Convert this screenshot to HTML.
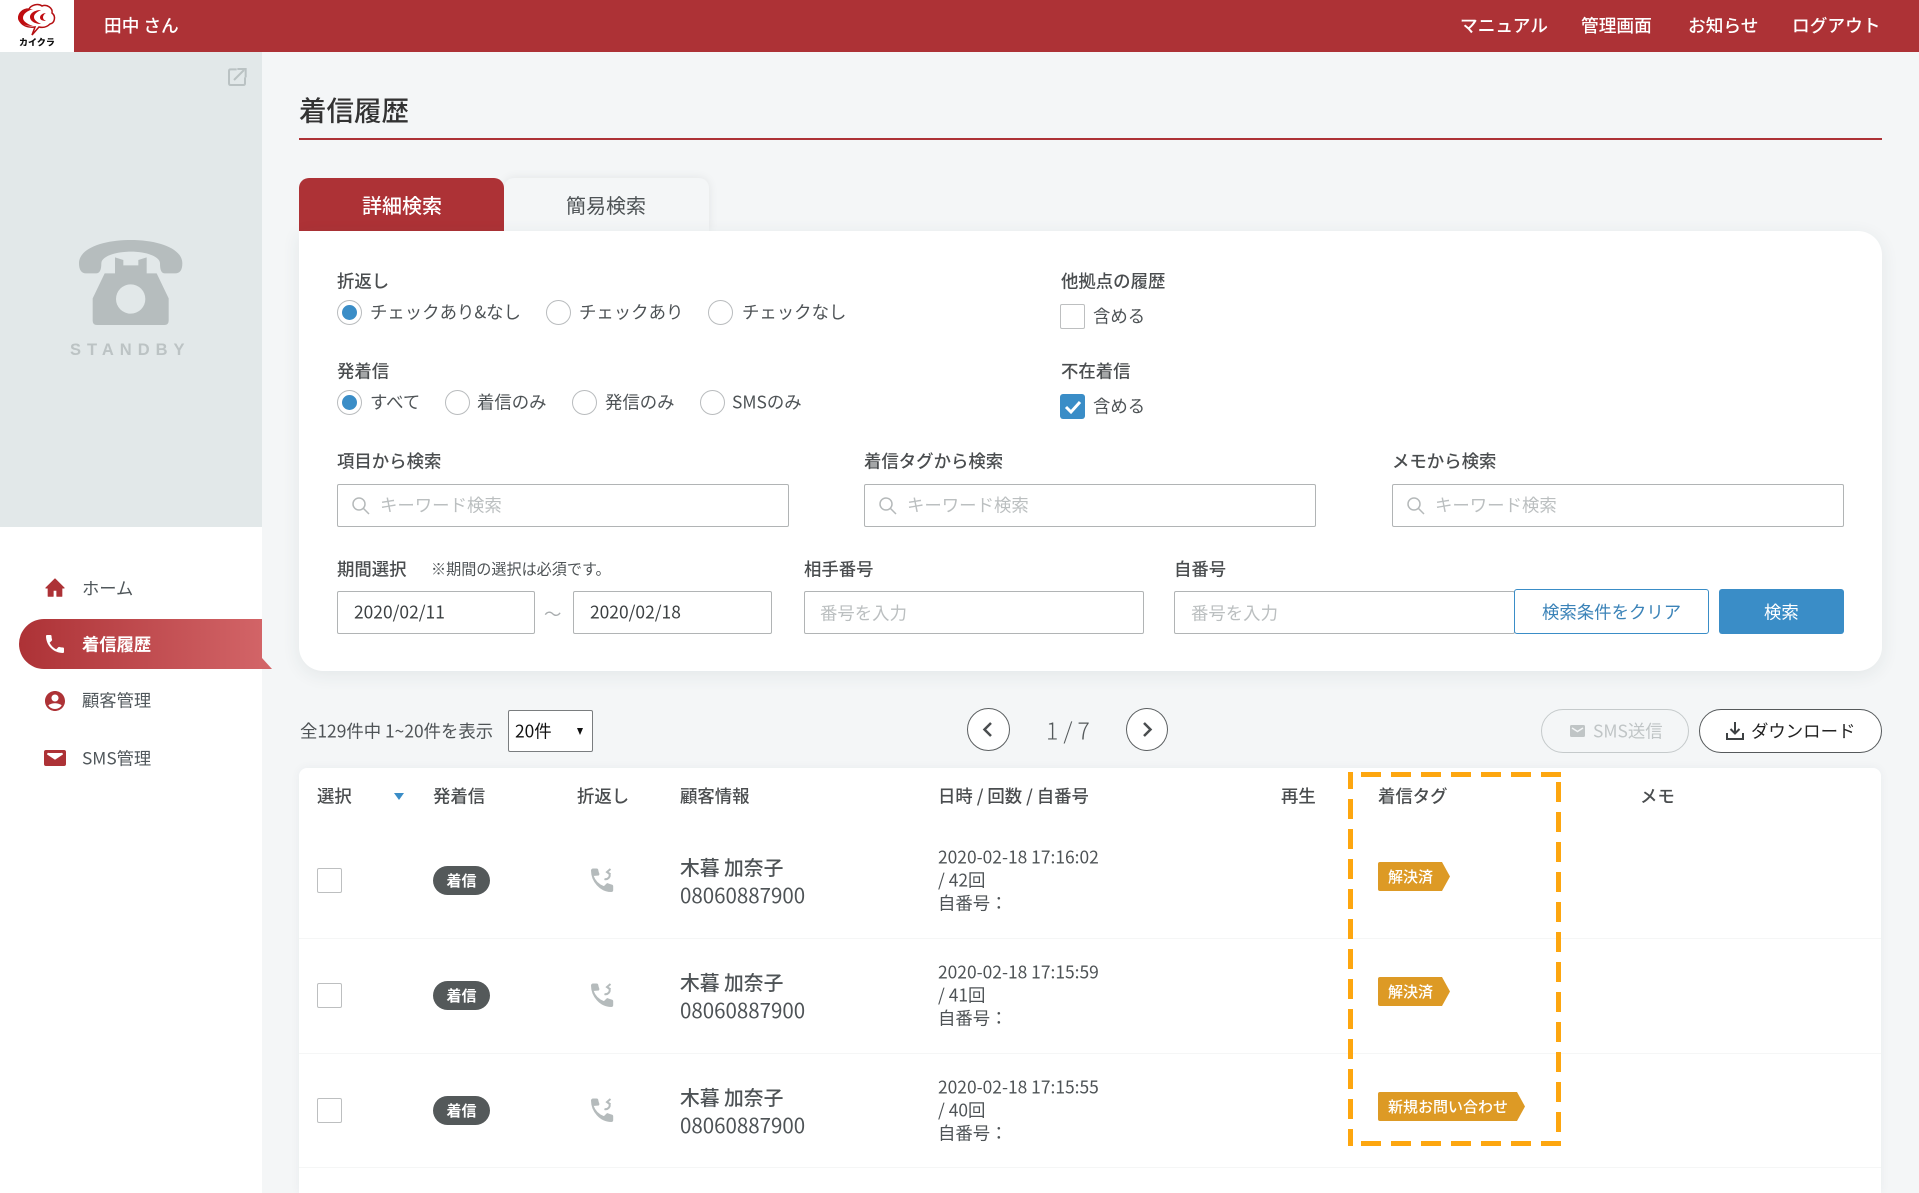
<!DOCTYPE html>
<html lang="ja"><head><meta charset="utf-8"><title>着信履歴</title>
<style>
*{box-sizing:border-box}
html,body{margin:0;padding:0;width:1919px;height:1193px;overflow:hidden}
body{font-family:"Noto Sans CJK JP","Liberation Sans",sans-serif;color:#4e5356}
#w{position:relative;width:1919px;height:1193px;overflow:hidden;background:#f4f6f7}
.a{position:absolute}
.t{position:absolute;line-height:1;white-space:nowrap;transform:translateY(calc(-50% - 1px));font-size:17.4px}
.h{color:#fff;font-weight:500;font-size:17.7px}
.l{color:#4a4d4f;font-weight:500}
.r{position:absolute;width:25px;height:25px;border-radius:50%;border:1px solid #b9bcbe;background:#fff}
.r.on::after{content:"";position:absolute;left:4px;top:4px;width:15px;height:15px;border-radius:50%;background:#3a8dc7}
.c{position:absolute;width:25px;height:25px;border:1px solid #bdbfc0;border-radius:2px;background:#fff}
.i{position:absolute;background:#fff;border:1px solid #b1b4b5;border-radius:2px;height:43px}
.p{color:#bbbfc0}
.sep{position:absolute;left:299px;width:1582px;height:1px;background:#f5f6f6}
.bd{position:absolute;left:433px;width:57px;height:29px;border-radius:15px;background:#54595a;color:#fff;font-size:15px;font-weight:700;line-height:29px;text-align:center}
.tag{position:absolute;left:1378px;height:29px;background:#dd9a25;color:#fff;font-size:15px;font-weight:500;line-height:29px;border-radius:2px 0 0 2px;clip-path:polygon(0 0,calc(100% - 8px) 0,100% 50%,calc(100% - 8px) 100%,0 100%)}
.name{font-size:19.800px;font-weight:500;color:#4e5356}
.num{font-size:20.500px;color:#4e5356}
.d{font-size:17.400px;color:#4e5356}
.s{font-size:17.300px;color:#50575b}
</style></head><body><div id="w">

<!-- header -->
<div class="a" style="left:0;top:0;width:1919px;height:52px;background:#ad3236"></div>
<div class="a" style="left:0;top:0;width:74px;height:52px;background:#fff"></div>
<svg class="a" style="left:0;top:0" width="74" height="52" viewBox="0 0 74 52">
<path d="M19 19C18 13 23 9 29 9C31 5 38 3 42 6C47 4 53 8 52 13C56 16 55 23 50 24C47 27 43 28 39 27L32 35L35 27C27 28 21 25 19 19Z" fill="#fff" stroke="#b50f12" stroke-width="1.500"/>
<path d="M33 9C24 9 18 13 18 18C18 23 25 26 33 26C27 24 23 21 23 18C23 14 27 11 33 9Z" fill="#c00d10"/>
<path d="M41 10C35 10 30 13 30 17C30 21 35 24 41 24C37 22 34 20 34 17C34 14 37 12 41 10Z" fill="#c00d10"/>
<path d="M46 13C43 13 40 15 40 17.500C40 20 43 21 46 21C44 20 43 19 43 17.500C43 16 44 14 46 13Z" fill="#c00d10"/>
</svg>
<div class="t" style="left:19px;top:43px;font-size:9px;font-weight:900;color:#111;letter-spacing:0">カイクラ</div>
<div class="t h" style="left:104px;top:27px;font-size:17.700px">田中 さん</div>
<div class="t h" style="left:1460px;top:27px">マニュアル</div>
<div class="t h" style="left:1581px;top:27px">管理画面</div>
<div class="t h" style="left:1688px;top:27px">お知らせ</div>
<div class="t h" style="left:1792px;top:27px">ログアウト</div>

<!-- sidebar -->
<div class="a" style="left:0;top:52px;width:262px;height:476px;background:#e2e8e9"></div>
<div class="a" style="left:0;top:527px;width:262px;height:666px;background:#fff"></div>
<svg class="a" style="left:0;top:0" width="300" height="380" viewBox="0 0 900 1140">
<path d="M710 208H692Q687 208 687 213V250Q687 255 692 255H730Q735 255 735 250V232" fill="none" stroke="#bac2c3" stroke-width="6"/>
<path d="M702 240L732 210M712 207H737V232" fill="none" stroke="#bac2c3" stroke-width="6"/>
<path d="M237 790C237 745 310 720 392 720C474 720 547 745 547 790C547 810 540 820 525 820L495 820C485 820 480 812 480 790C480 770 440 755 392 755C344 755 304 770 304 790C304 812 298 820 288 820L258 820C245 820 237 810 237 790Z" fill="#b6bdbe"/>
<path d="M345 772L370 780V796H415V780L440 772V820H470L506 895V962Q506 975 493 975H291Q278 975 278 962V895L314 820H345Z" fill="#b6bdbe"/>
<circle cx="392" cy="897" r="44" fill="#e2e8e9"/>
</svg>
<div class="t" style="left:70px;top:351px;font-family:'Liberation Sans',sans-serif;font-size:16.500px;font-weight:700;letter-spacing:6px;color:#bcc3c4">STANDBY</div>

<div class="a" style="left:19px;top:619px;width:243px;height:50px;border-radius:25px 0 0 25px;background:linear-gradient(90deg,#ad3236,#d26467)"></div>
<div class="a" style="left:262px;top:658px;width:10px;height:11px;background:#d26467;clip-path:polygon(0 0,100% 100%,0 100%)"></div>
<svg class="a" style="left:44px;top:577px" width="22" height="22" viewBox="0 0 24 24"><path d="M10 21v-6.500h4V21h5.500v-9H22L12 2 2 12h2.500v9z" fill="#ad3236" stroke="#ad3236" stroke-linejoin="round"/></svg>
<svg class="a" style="left:43px;top:632px" width="24" height="24" viewBox="0 0 24 24"><path d="M6.620 10.790c1.440 2.830 3.760 5.140 6.590 6.590l2.200-2.200c.27-.27.67-.36 1.020-.24 1.120.37 2.330.57 3.570.57.550 0 1 .45 1 1V20c0 .55-.45 1-1 1-9.390 0-17-7.610-17-17 0-.55.45-1 1-1h3.500c.55 0 1 .45 1 1 0 1.250.2 2.450.57 3.570.11.35.03.74-.25 1.020l-2.200 2.200z" fill="#fff"/></svg>
<svg class="a" style="left:43px;top:689px" width="24" height="24" viewBox="0 0 24 24"><path d="M12 2C6.480 2 2 6.480 2 12s4.480 10 10 10 10-4.480 10-10S17.520 2 12 2zm0 3.500c1.930 0 3.500 1.570 3.500 3.500S13.930 12.500 12 12.500 8.500 10.930 8.500 9 10.070 5.500 12 5.500zm0 14.500c-2.800 0-5.270-1.430-6.700-3.600C6.800 15 10 14.300 12 14.300s5.200.7 6.700 2.100C17.270 18.570 14.800 20 12 20z" fill="#ad3236"/></svg>
<svg class="a" style="left:44px;top:750px" width="22" height="16" viewBox="0 0 22 16"><path d="M2 0h18q2 0 2 2v12q0 2-2 2H2q-2 0-2-2V2q0-2 2-2zm1 3l8 5.500L19 3" fill="#ad3236"/><path d="M3.500 3.500L11 8.500l7.500-5" fill="none" stroke="#fff" stroke-width="2"/></svg>
<div class="t s" style="left:82px;top:588px">ホーム</div>
<div class="t s" style="left:82px;top:644px;color:#fff;font-weight:700">着信履歴</div>
<div class="t s" style="left:82px;top:700px">顧客管理</div>
<div class="t s" style="left:82px;top:758px">SMS管理</div>

<!-- title -->
<div class="t" style="left:299px;top:110px;font-size:27.500px;font-weight:500;color:#333">着信履歴</div>
<div class="a" style="left:299px;top:138px;width:1583px;height:2px;background:#ad3236"></div>

<!-- tabs -->
<div class="a" style="left:504px;top:178px;width:205px;height:53px;border-radius:10px 10px 0 0;background:#f4f6f7;box-shadow:0 0 10px rgba(0,0,0,.08)"></div>
<div class="a" style="left:299px;top:178px;width:205px;height:53px;border-radius:10px 10px 0 0;background:#ad3236"></div>
<div class="t" style="left:362px;top:206px;font-size:20px;font-weight:500;color:#fff">詳細検索</div>
<div class="t" style="left:566px;top:206px;font-size:20px;color:#4e5356">簡易検索</div>

<!-- search panel -->
<div class="a" style="left:299px;top:231px;width:1583px;height:440px;background:#fff;border-radius:0 24px 24px 24px;box-shadow:0 4px 18px rgba(40,60,70,.08)"></div>

<div class="t l" style="left:337px;top:282px">折返し</div>
<div class="r on" style="left:337px;top:300px"></div><div class="t" style="left:370px;top:313px">チェックあり&amp;なし</div>
<div class="r" style="left:546px;top:300px"></div><div class="t" style="left:579px;top:313px">チェックあり</div>
<div class="r" style="left:708px;top:300px"></div><div class="t" style="left:742px;top:313px">チェックなし</div>

<div class="t l" style="left:337px;top:372px">発着信</div>
<div class="r on" style="left:337px;top:390px"></div><div class="t" style="left:370px;top:403px">すべて</div>
<div class="r" style="left:445px;top:390px"></div><div class="t" style="left:477px;top:403px">着信のみ</div>
<div class="r" style="left:572px;top:390px"></div><div class="t" style="left:605px;top:403px">発信のみ</div>
<div class="r" style="left:700px;top:390px"></div><div class="t" style="left:732px;top:403px">SMSのみ</div>

<div class="t l" style="left:1061px;top:282px">他拠点の履歴</div>
<div class="c" style="left:1060px;top:304px"></div><div class="t" style="left:1093px;top:317px">含める</div>
<div class="t l" style="left:1061px;top:372px">不在着信</div>
<div class="a" style="left:1060px;top:394px;width:25px;height:25px;background:#3a8dc7;border-radius:3px"></div>
<svg class="a" style="left:1060px;top:394px" width="25" height="25" viewBox="0 0 25 25"><path d="M6 13l5 5 9-10" fill="none" stroke="#fff" stroke-width="3"/></svg>
<div class="t" style="left:1093px;top:407px">含める</div>

<div class="t l" style="left:337px;top:462px">項目から検索</div>
<div class="t l" style="left:864px;top:462px">着信タグから検索</div>
<div class="t l" style="left:1392px;top:462px">メモから検索</div>
<div class="i" style="left:337px;top:484px;width:452px"></div>
<div class="i" style="left:864px;top:484px;width:452px"></div>
<div class="i" style="left:1392px;top:484px;width:452px"></div>
<svg class="a" style="left:351px;top:496px" width="20" height="20" viewBox="0 0 20 20"><circle cx="8" cy="8" r="6" fill="none" stroke="#b5b9ba" stroke-width="1.500"/><path d="M12.500 12.500L18 18" stroke="#b5b9ba" stroke-width="1.500"/></svg>
<svg class="a" style="left:878px;top:496px" width="20" height="20" viewBox="0 0 20 20"><circle cx="8" cy="8" r="6" fill="none" stroke="#b5b9ba" stroke-width="1.500"/><path d="M12.500 12.500L18 18" stroke="#b5b9ba" stroke-width="1.500"/></svg>
<svg class="a" style="left:1406px;top:496px" width="20" height="20" viewBox="0 0 20 20"><circle cx="8" cy="8" r="6" fill="none" stroke="#b5b9ba" stroke-width="1.500"/><path d="M12.500 12.500L18 18" stroke="#b5b9ba" stroke-width="1.500"/></svg>
<div class="t p" style="left:380px;top:506px">キーワード検索</div>
<div class="t p" style="left:907px;top:506px">キーワード検索</div>
<div class="t p" style="left:1435px;top:506px">キーワード検索</div>

<div class="t l" style="left:337px;top:570px">期間選択</div>
<div class="t" style="left:431px;top:570px;font-size:15.100px">※期間の選択は必須です。</div>
<div class="t l" style="left:804px;top:570px">相手番号</div>
<div class="t l" style="left:1174px;top:570px">自番号</div>
<div class="i" style="left:337px;top:591px;width:198px"></div>
<div class="i" style="left:573px;top:591px;width:199px"></div>
<div class="t" style="left:354px;top:613px;color:#3c4042">2020/02/11</div>
<div class="t" style="left:544px;top:615px;color:#a9adaf">～</div>
<div class="t" style="left:590px;top:613px;color:#3c4042">2020/02/18</div>
<div class="i" style="left:804px;top:591px;width:340px"></div>
<div class="i" style="left:1174px;top:591px;width:341px"></div>
<div class="t p" style="left:820px;top:614px">番号を入力</div>
<div class="t p" style="left:1191px;top:614px">番号を入力</div>
<div class="a" style="left:1514px;top:589px;width:195px;height:45px;background:#fff;border:1.500px solid #3a8dc7;border-radius:3px"></div>
<div class="t" style="left:1542px;top:613px;color:#3b83b8">検索条件をクリア</div>
<div class="a" style="left:1719px;top:589px;width:125px;height:45px;background:#3a8dc7;border-radius:3px"></div>
<div class="t" style="left:1764px;top:613px;color:#fff">検索</div>

<!-- list toolbar -->
<div class="t" style="left:300px;top:732px">全129件中 1~20件を表示</div>
<div class="a" style="left:508px;top:710px;width:85px;height:42px;background:#fff;border:1px solid #7a7d7f;border-radius:2px"></div>
<div class="t" style="left:515px;top:732px;color:#111">20件</div>
<div class="a" style="left:577px;top:728px;width:0;height:0;border-left:3.500px solid transparent;border-right:3.500px solid transparent;border-top:7px solid #111"></div>

<div class="a" style="left:967px;top:708px;width:43px;height:43px;border-radius:50%;background:#fff;border:1.500px solid #5b5f61"></div>
<svg class="a" style="left:967px;top:708px" width="43" height="43" viewBox="0 0 43 43"><path d="M24 15l-6.500 6.500L24 28" fill="none" stroke="#4a4e50" stroke-width="2.500"/></svg>
<div class="t" style="left:1046px;top:731px;font-size:23px;font-weight:300;color:#54595b">1 / 7</div>
<div class="a" style="left:1126px;top:708px;width:42px;height:43px;border-radius:50%;background:#fff;border:1.500px solid #5b5f61"></div>
<svg class="a" style="left:1126px;top:708px" width="43" height="43" viewBox="0 0 43 43"><path d="M18 15l6.500 6.500L18 28" fill="none" stroke="#4a4e50" stroke-width="2.500"/></svg>

<div class="a" style="left:1541px;top:709px;width:148px;height:44px;border-radius:22px;border:1px solid #c5cacb;background:#f4f6f7"></div>
<svg class="a" style="left:1570px;top:725px" width="15" height="12" viewBox="0 0 15 12"><rect width="15" height="12" rx="1.500" fill="#c0c5c6"/><path d="M2 3l5.500 3.500L13 3" fill="none" stroke="#f4f6f7" stroke-width="1.500"/></svg>
<div class="t" style="left:1593px;top:732px;color:#c0c5c6">SMS送信</div>
<div class="a" style="left:1699px;top:709px;width:183px;height:44px;border-radius:22px;border:1.500px solid #55595b;background:#fff"></div>
<svg class="a" style="left:1725px;top:721px" width="20" height="20" viewBox="0 0 20 20"><path d="M2 12v6h16v-6" fill="none" stroke="#3e4244" stroke-width="2"/><path d="M10 1v11M5.500 8L10 12.500 14.500 8" fill="none" stroke="#3e4244" stroke-width="2"/></svg>
<div class="t" style="left:1751px;top:732px;color:#222">ダウンロード</div>

<!-- table -->
<div class="a" style="left:299px;top:768px;width:1582px;height:425px;background:#fff;border-radius:8px 8px 0 0;box-shadow:0 0 10px rgba(40,60,70,.05)"></div>
<div class="t l" style="left:317px;top:797px">選択</div>
<div class="a" style="left:394px;top:793px;width:0;height:0;border-left:5px solid transparent;border-right:5px solid transparent;border-top:7px solid #3a8dc7"></div>
<div class="t l" style="left:433px;top:797px">発着信</div>
<div class="t l" style="left:577px;top:797px">折返し</div>
<div class="t l" style="left:680px;top:797px">顧客情報</div>
<div class="t l" style="left:938px;top:797px">日時 / 回数 / 自番号</div>
<div class="t l" style="left:1281px;top:797px">再生</div>
<div class="t l" style="left:1378px;top:797px">着信タグ</div>
<div class="t l" style="left:1640px;top:797px">メモ</div>
<div class="sep" style="top:938px"></div>
<div class="sep" style="top:1053px"></div>
<div class="sep" style="top:1167px"></div>

<!-- row 1 -->
<div class="c" style="left:317px;top:868px"></div>
<div class="bd" style="top:866px">着信</div>
<svg class="a" style="left:589px;top:866px" width="26" height="26" viewBox="0 0 26 26"><path d="M4 9.500c1.800 5.300 5.800 9.300 11 11.200l2.700-2.600c.4-.4.9-.5 1.300-.3 1.200.5 2.100.9 3.500 1.200.7.1 1.200.6 1.200 1.300V24c0 .8-.6 1.500-1.500 1.500C11 25.500 2.500 15 2.500 4.500 2.500 3.700 3.200 3 4 3h3.500c.7 0 1.200.5 1.300 1.200.2 1.300.5 2.300 1 3.400.2.5.1 1-.3 1.400z" fill="#b5bbbc" stroke="#b5bbbc" stroke-width="1"/><path d="M15.500 13a4 4 0 0 0 5-5M21.500 8.500L18 6l3.500-3" fill="none" stroke="#b5bbbc" stroke-width="2"/></svg>
<div class="t name" style="left:680px;top:868px">木暮 加奈子</div>
<div class="t num" style="left:680px;top:894.500px">08060887900</div>
<div class="t d" style="left:938px;top:858px">2020-02-18 17:16:02</div>
<div class="t d" style="left:938px;top:881px">/ 42回</div>
<div class="t d" style="left:938px;top:904px">自番号：</div>
<div class="tag" style="top:862px;width:72px;padding-left:10px">解決済</div>

<!-- row 2 -->
<div class="c" style="left:317px;top:983px"></div>
<div class="bd" style="top:981px">着信</div>
<svg class="a" style="left:589px;top:981px" width="26" height="26" viewBox="0 0 26 26"><path d="M4 9.500c1.800 5.300 5.800 9.300 11 11.200l2.700-2.600c.4-.4.9-.5 1.300-.3 1.200.5 2.100.9 3.500 1.200.7.1 1.200.6 1.200 1.300V24c0 .8-.6 1.500-1.500 1.500C11 25.500 2.500 15 2.500 4.500 2.500 3.700 3.200 3 4 3h3.500c.7 0 1.200.5 1.300 1.200.2 1.300.5 2.300 1 3.400.2.5.1 1-.3 1.400z" fill="#b5bbbc" stroke="#b5bbbc" stroke-width="1"/><path d="M15.500 13a4 4 0 0 0 5-5M21.500 8.500L18 6l3.500-3" fill="none" stroke="#b5bbbc" stroke-width="2"/></svg>
<div class="t name" style="left:680px;top:983px">木暮 加奈子</div>
<div class="t num" style="left:680px;top:1009.500px">08060887900</div>
<div class="t d" style="left:938px;top:973px">2020-02-18 17:15:59</div>
<div class="t d" style="left:938px;top:996px">/ 41回</div>
<div class="t d" style="left:938px;top:1019px">自番号：</div>
<div class="tag" style="top:977px;width:72px;padding-left:10px">解決済</div>

<!-- row 3 -->
<div class="c" style="left:317px;top:1098px"></div>
<div class="bd" style="top:1096px">着信</div>
<svg class="a" style="left:589px;top:1096px" width="26" height="26" viewBox="0 0 26 26"><path d="M4 9.500c1.800 5.300 5.800 9.300 11 11.200l2.700-2.600c.4-.4.9-.5 1.300-.3 1.200.5 2.100.9 3.500 1.200.7.1 1.200.6 1.200 1.300V24c0 .8-.6 1.500-1.500 1.500C11 25.500 2.500 15 2.500 4.500 2.500 3.700 3.200 3 4 3h3.500c.7 0 1.200.5 1.300 1.200.2 1.300.5 2.300 1 3.400.2.5.1 1-.3 1.400z" fill="#b5bbbc" stroke="#b5bbbc" stroke-width="1"/><path d="M15.500 13a4 4 0 0 0 5-5M21.500 8.500L18 6l3.500-3" fill="none" stroke="#b5bbbc" stroke-width="2"/></svg>
<div class="t name" style="left:680px;top:1098px">木暮 加奈子</div>
<div class="t num" style="left:680px;top:1124.500px">08060887900</div>
<div class="t d" style="left:938px;top:1088px">2020-02-18 17:15:55</div>
<div class="t d" style="left:938px;top:1111px">/ 40回</div>
<div class="t d" style="left:938px;top:1134px">自番号：</div>
<div class="tag" style="top:1092px;width:147px;padding-left:10px;font-size:15px">新規お問い合わせ</div>

<!-- dashed highlight -->
<svg class="a" style="left:0;top:0;pointer-events:none" width="1919" height="1193" viewBox="0 0 1919 1193" fill="none" stroke="#fda60f" stroke-width="5" stroke-dasharray="20 10">
<path d="M1561 774.500H1361"/>
<path d="M1558.500 782V1132"/>
<path d="M1361 1143.500H1561"/>
<path d="M1350.500 772V1146" stroke-dashoffset="3"/>
</svg>
</div></body></html>
